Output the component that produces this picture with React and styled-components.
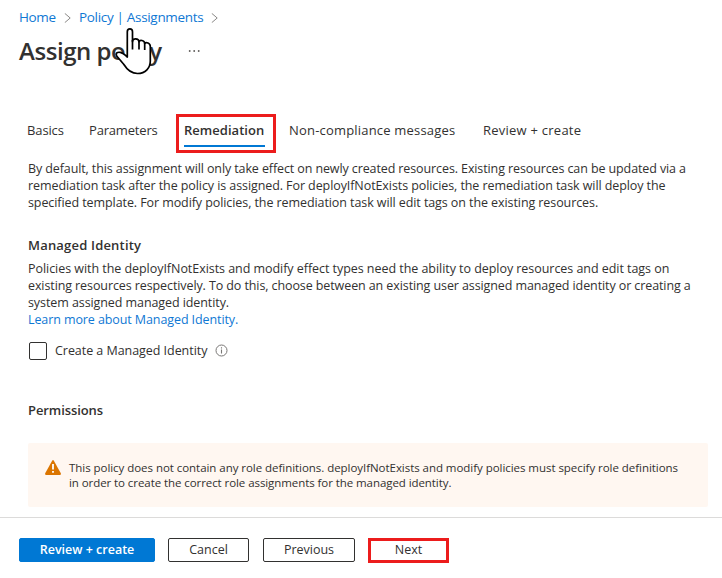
import React from "react";
import styled, { createGlobalStyle } from "styled-components";

const GlobalStyle = createGlobalStyle`
  *, *::before, *::after { box-sizing: border-box; }
  body {
    margin: 0;
    background: #fff;
    color: #323130;
    font-family: "Open Sans", "Segoe UI", sans-serif;
    overflow: hidden;
  }
  h1, h2, p { margin: 0; }
`;

const Page = styled.main`
  position: relative;
  display: flex;
  flex-direction: column;
  width: 722px;
  height: 578px;
`;

const Line = styled.span`
  display: block;
  white-space: nowrap;
  letter-spacing: ${(p) => p.$track || 0}px;
`;

const Breadcrumb = styled.nav`
  display: flex;
  align-items: center;
  height: 34px;
  padding-left: 19px;
`;

const Crumb = styled.a`
  width: ${(p) => p.$width}px;
  color: #0f78d4;
  font-size: 13.5px;
  line-height: 20px;
  white-space: nowrap;
  letter-spacing: ${(p) => p.$track}px;
`;

const Chevron = styled.svg`
  width: 7px;
  height: 10px;
  margin: 2px 8px 0 7px;
  fill: none;
  stroke: #8a8886;
`;

const TitleBar = styled.header`
  display: flex;
  align-items: center;
  height: 34px;
  padding-left: 19px;
`;

const Title = styled.h1`
  width: 169px;
  font-size: 24px;
  font-weight: 600;
  line-height: 34px;
  letter-spacing: -0.45px;
  white-space: nowrap;
`;

const MoreIcon = styled.svg`
  width: 12px;
  height: 4px;
  fill: #605e5c;
`;

const HandCursor = styled.svg`
  position: absolute;
  left: 108px;
  top: 22px;
  width: 50px;
  height: 56px;
`;

const Tabs = styled.nav`
  display: flex;
  height: 39px;
  margin-top: 46px;
  padding-left: 27px;
  font-size: 13px;
  line-height: 33px;
`;

const Tab = styled.a`
  width: ${(p) => p.$width}px;
  white-space: nowrap;
  letter-spacing: ${(p) => p.$track}px;
`;

const ActiveTab = styled.div`
  width: 100px;
  height: 39px;
  margin-right: 13px;
  padding: 0 5px;
  border: 3px solid #ec1c1c;
`;

const ActiveLabel = styled.a`
  display: block;
  width: 81px;
  height: 30px;
  border-bottom: 2px solid #0078d4;
  font-weight: 600;
  line-height: 27px;
  letter-spacing: 0.03px;
  white-space: nowrap;
`;

const Content = styled.section`
  padding: 7px 14px 0 28px;
  font-size: 12.5px;
  line-height: 17px;
`;

const Heading = styled.h2`
  margin-top: ${(p) => p.$gap}px;
  font-size: 13px;
  font-weight: 600;
  line-height: 20px;
  letter-spacing: ${(p) => p.$track}px;
`;

const Paragraph = styled.p`
  margin-top: ${(p) => p.$gap || 0}px;
`;

const Link = styled(Line)`
  color: #0f78d4;
`;

const CheckRow = styled.label`
  display: flex;
  align-items: center;
  height: 18px;
  margin-top: 14px;
  padding-left: 1px;
`;

const CheckLabel = styled(Line)`
  margin-top: -2px;
`;

const Box = styled.span`
  width: 18px;
  height: 18px;
  margin-right: 8px;
  border: 1px solid #323130;
  border-radius: 2px;
`;

const InfoIcon = styled.svg`
  width: 13px;
  height: 13px;
  margin: -1px 0 0 8px;
`;

const Alert = styled.div`
  display: flex;
  width: 680px;
  height: 64px;
  margin-top: 23px;
  padding: 17px 0 0 17px;
  background: #fff7f1;
  border-radius: 2px;
  font-size: 11.5px;
  line-height: 15px;
`;

const WarningIcon = styled.svg`
  width: 16px;
  height: 15px;
  margin-right: 8px;
`;

const Footer = styled.footer`
  display: flex;
  align-items: flex-start;
  width: 100%;
  height: 61px;
  margin-top: auto;
  padding: 20px 0 0 19px;
  border-top: 1px solid #dcdbda;
`;

const Button = styled.button`
  display: flex;
  justify-content: center;
  align-items: center;
  width: ${(p) => p.$width}px;
  height: 24px;
  margin-right: ${(p) => p.$gap || 0}px;
  padding: 0 0 1px;
  border: 1px solid ${(p) => (p.$primary ? "#0078d4" : "#323130")};
  border-radius: 2px;
  background: ${(p) => (p.$primary ? "#0078d4" : "#fff")};
  color: ${(p) => (p.$primary ? "#fff" : "#323130")};
  font-family: inherit;
  font-size: 12.5px;
  font-weight: ${(p) => (p.$primary ? 600 : 400)};
  line-height: 20px;
`;

const NextButton = styled(Button)`
  height: 25px;
  padding-bottom: 2px;
  border: 3px solid #ec1c1c;
  border-radius: 0;
`;

function Separator() {
  return (
    <Chevron viewBox="0 0 7 10">
      <path d="M.8.4 6.2 5 .8 9.6" />
    </Chevron>
  );
}

export default function App() {
  return (
    <>
      <GlobalStyle />
      <Page>
        <Breadcrumb>
          <Crumb $width={38} $track={-0.35}>Home</Crumb>
          <Separator />
          <Crumb $width={125} $track={-0.32}>Policy | Assignments</Crumb>
          <Separator />
        </Breadcrumb>
        <TitleBar>
          <Title>Assign policy</Title>
          <MoreIcon viewBox="0 0 12 4">
            <circle cx="1.7" cy="2" r=".95" />
            <circle cx="6.2" cy="2" r=".95" />
            <circle cx="10.7" cy="2" r=".95" />
          </MoreIcon>
        </TitleBar>

        <Tabs>
          <Tab $width={62} $track={-0.12}>Basics</Tab>
          <Tab $width={87} $track={-0.18}>Parameters</Tab>
          <ActiveTab>
            <ActiveLabel>Remediation</ActiveLabel>
          </ActiveTab>
          <Tab $width={194} $track={0.19}>Non-compliance messages</Tab>
          <Tab $width={100} $track={0.24}>Review + create</Tab>
        </Tabs>

        <Content>
          <Paragraph>
            <Line $track={-0.108}>By default, this assignment will only take effect on newly created resources. Existing resources can be updated via a</Line>
            <Line $track={-0.084}>remediation task after the policy is assigned. For deployIfNotExists policies, the remediation task will deploy the</Line>
            <Line $track={-0.083}>specified template. For modify policies, the remediation task will edit tags on the existing resources.</Line>
          </Paragraph>

          <Heading $gap={24} $track={0.19}>Managed Identity</Heading>
          <Paragraph $gap={5}>
            <Line $track={-0.048}>Policies with the deployIfNotExists and modify effect types need the ability to deploy resources and edit tags on</Line>
            <Line $track={-0.097}>existing resources respectively. To do this, choose between an existing user assigned managed identity or creating a</Line>
            <Line $track={-0.083}>system assigned managed identity.</Line>
            <Link as="a" $track={-0.095}>Learn more about Managed Identity.</Link>
          </Paragraph>

          <CheckRow>
            <Box />
            <CheckLabel $track={-0.045}>Create a Managed Identity</CheckLabel>
            <InfoIcon viewBox="0 0 13 13">
              <circle cx="6.5" cy="6.5" r="5.5" fill="none" stroke="#797775" />
              <path d="M6.5 5.6v4M6.5 3.3v1.3" stroke="#797775" strokeWidth="1.1" />
            </InfoIcon>
          </CheckRow>

          <Heading $gap={40} $track={-0.08}>Permissions</Heading>
          <Alert>
            <WarningIcon viewBox="0 0 16 15">
              <path d="M7 .9Q8-.7 9 .9L15.8 13.3Q16.3 15 14.8 15H1.2Q-.3 15 .2 13.3Z" fill="#db7500" />
              <path d="M7.1 4h1.8v5.6H7.1zM7.1 10.9h1.8v1.8H7.1z" fill="#fff" />
            </WarningIcon>
            <Paragraph>
              <Line $track={-0.045}>This policy does not contain any role definitions. deployIfNotExists and modify policies must specify role definitions</Line>
              <Line $track={-0.073}>in order to create the correct role assignments for the managed identity.</Line>
            </Paragraph>
          </Alert>
        </Content>

        <Footer>
          <Button $primary $width={136} $gap={13}>Review + create</Button>
          <Button $width={81} $gap={14}>Cancel</Button>
          <Button $width={92} $gap={13}>Previous</Button>
          <NextButton $width={81}>Next</NextButton>
        </Footer>

        <HandCursor viewBox="0 0 50 56">
          <path
            d="M19.3 35V9.7C19.3 6 24.5 6 24.5 9.7V19.5C24.5 16 30.7 16 31 19.8C31.6 17.6 36.5 18 36.7 21.4C38 19.7 42.3 20.8 42.3 24.4V39C42.3 46 37.5 51.5 29.5 51.5C22.5 51.5 18.7 47 15.7 42.2L8.9 34.2C6.9 31.2 9.5 29.8 12.3 30.4C15.8 31.2 16.8 33 19.3 35Z"
            fill="#fff"
            stroke="#000"
            strokeWidth="1.7"
            strokeLinejoin="round"
          />
          <path d="M24.5 18V27.5M31 19V27.5M36.7 21V28" fill="none" stroke="#000" strokeWidth="1.7" />
        </HandCursor>
      </Page>
    </>
  );
}
